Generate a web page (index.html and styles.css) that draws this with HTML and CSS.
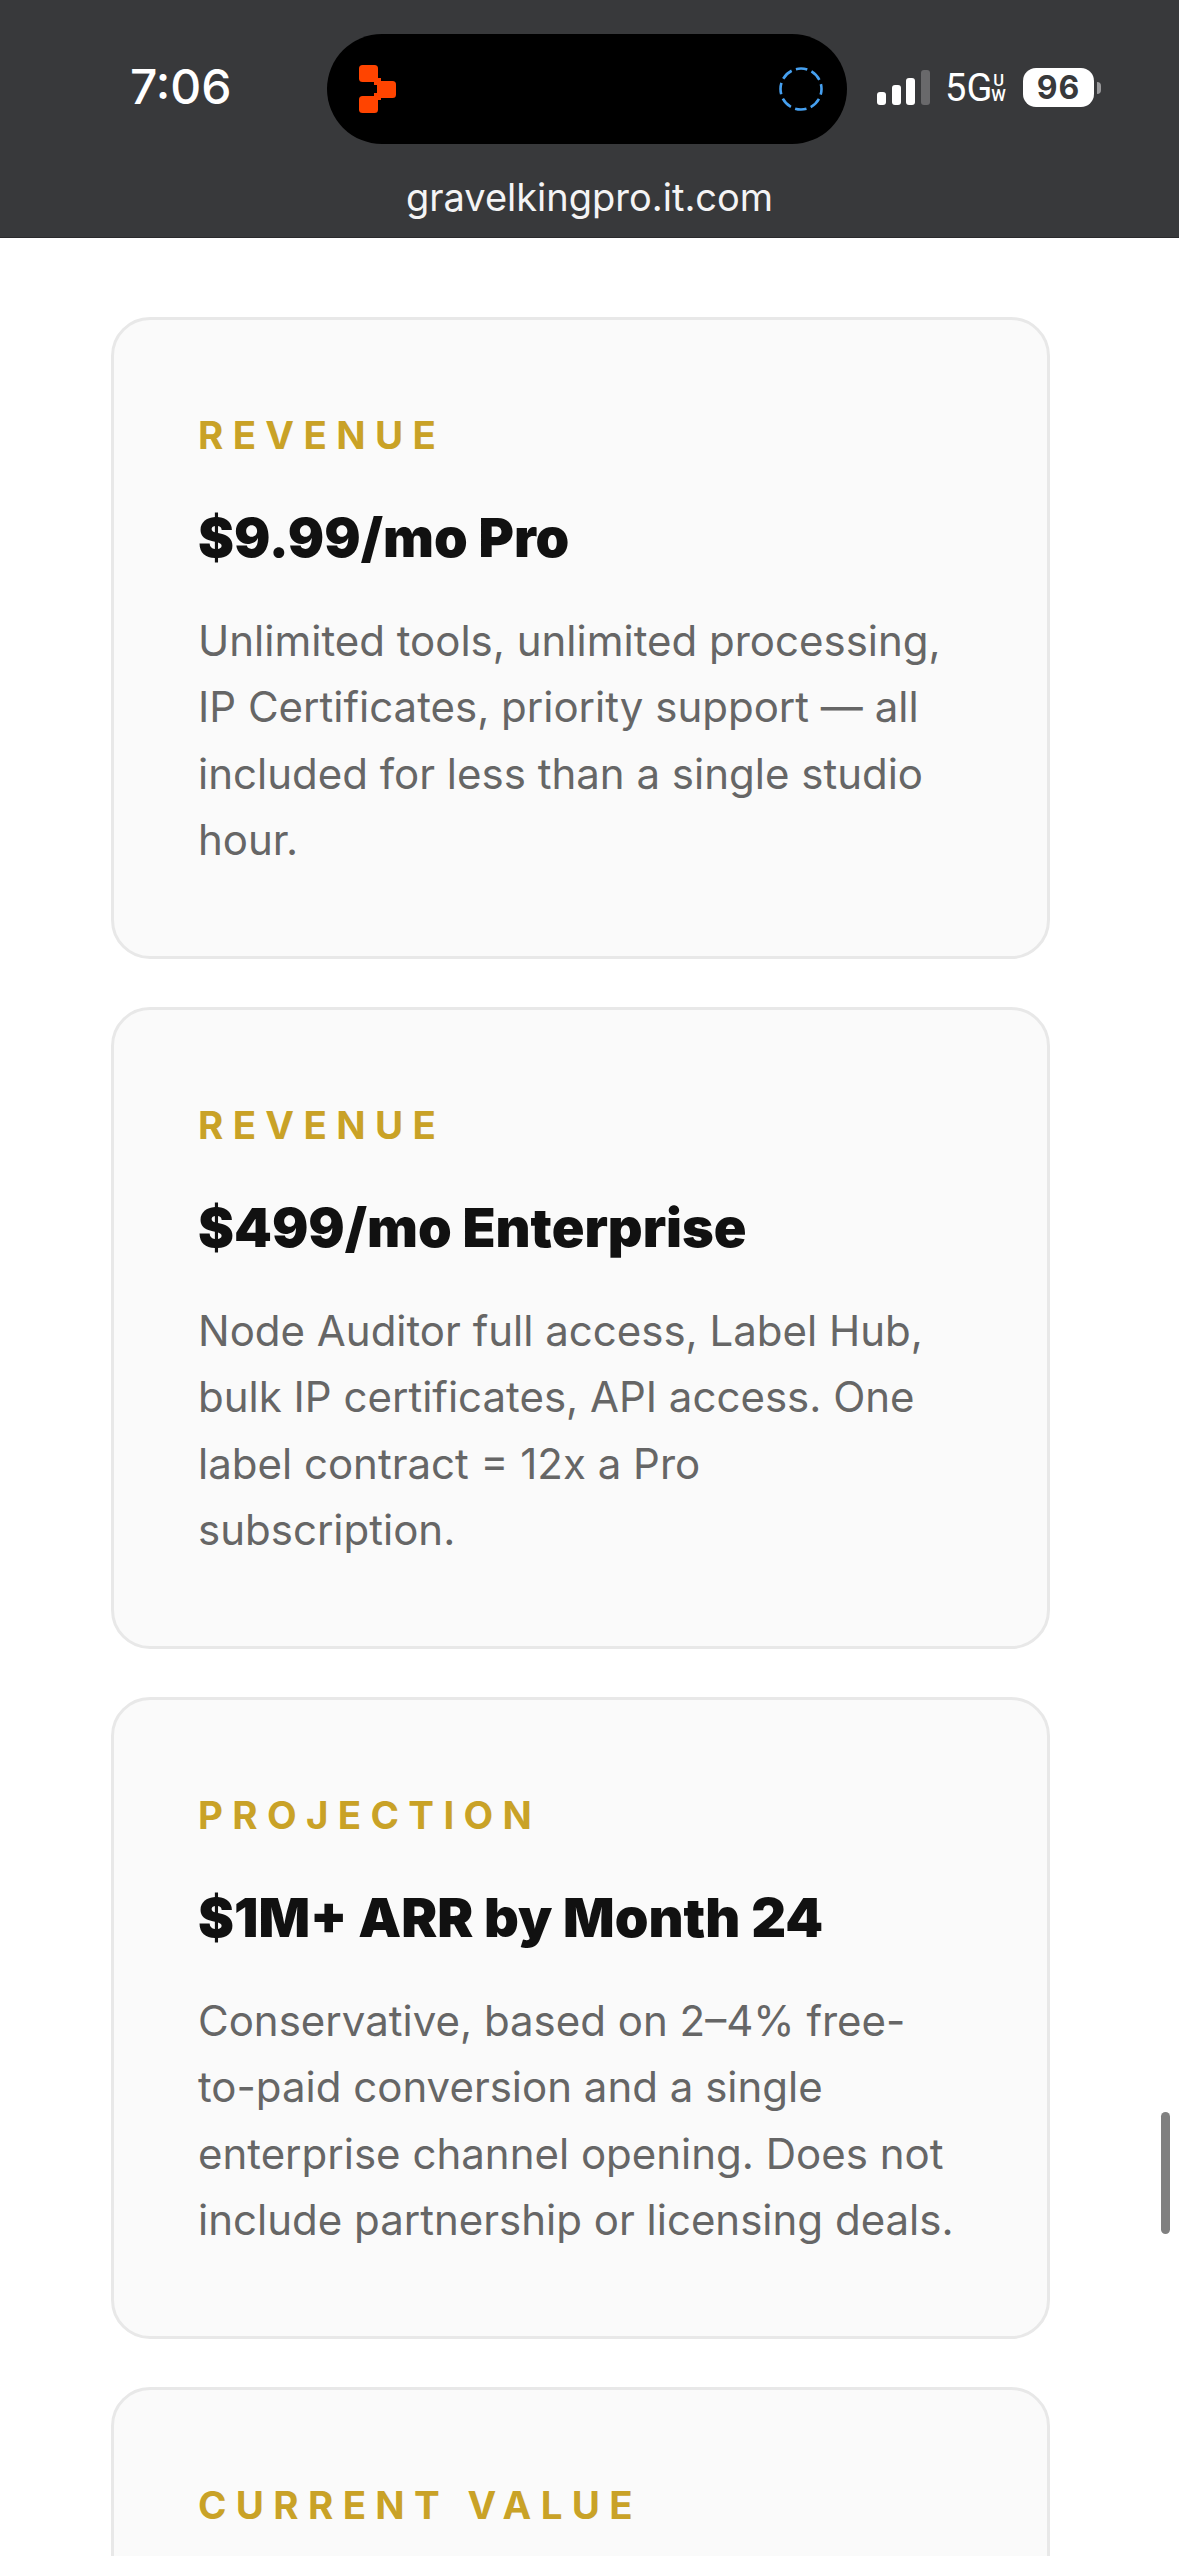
FILE: index.html
```html
<!DOCTYPE html>
<html lang="en">
<head>
<meta charset="utf-8">
<title>gravelkingpro.it.com</title>
<link rel="stylesheet" href="styles.css">
</head>
<body>
<div class="page">
  <header class="top">
    <div class="status">
      <span class="time">7:06</span>
      <div class="island">
        <svg class="logo" width="37" height="48" viewBox="0 0 37 48"><rect x="0" y="0" width="19" height="17" rx="3.5" fill="#ff4400"/><rect x="18" y="16" width="19" height="17" rx="3.5" fill="#ff4400"/><rect x="0" y="31" width="19" height="17" rx="3.5" fill="#ff4400"/><rect x="15" y="13" width="7" height="7" fill="#ff4400"/><rect x="15" y="28" width="7" height="7" fill="#ff4400"/></svg>
        <svg class="ring" width="44" height="44" viewBox="0 0 44 44"><circle cx="22" cy="22" r="20.5" fill="none" stroke="#46a0f0" stroke-width="2.6" stroke-dasharray="11.6 4.5" stroke-dashoffset="5.8"/></svg>
      </div>
      <div class="indicators">
        <div class="signal"><i class="bar b1"></i><i class="bar b2"></i><i class="bar b3"></i><i class="bar b4"></i></div>
        <span class="net">5G</span>
        <span class="uw"><span>U</span><span>W</span></span>
        <div class="battery"><span class="level">96</span></div>
        <i class="nub"></i>
      </div>
    </div>
    <div class="url">gravelkingpro.it.com</div>
  </header>
  <main class="cards">
    <section class="card">
      <div class="label">REVENUE</div>
      <h2 class="title">$9.99/mo Pro</h2>
      <p class="desc">Unlimited tools, unlimited processing, IP Certificates, priority support — all included for less than a single studio hour.</p>
    </section>
    <section class="card">
      <div class="label">REVENUE</div>
      <h2 class="title">$499/mo Enterprise</h2>
      <p class="desc">Node Auditor full access, Label Hub, bulk IP certificates, API access. One label contract = 12x a Pro subscription.</p>
    </section>
    <section class="card">
      <div class="label">PROJECTION</div>
      <h2 class="title">$1M+ ARR by Month 24</h2>
      <p class="desc">Conservative, based on 2–4% free-to-paid conversion and a single enterprise channel opening. Does not include partnership or licensing deals.</p>
    </section>
    <section class="card">
      <div class="label">CURRENT VALUE</div>
    </section>
  </main>
  <div class="scrollbar"></div>
</div>
</body>
</html>
```

FILE: styles.css
```css
* { box-sizing: border-box; }
html, body { margin: 0; padding: 0; background: #fff; }
.page {
  position: relative;
  width: 1179px;
  height: 2556px;
  overflow: hidden;
  font-family: Inter, "Liberation Sans", sans-serif;
}
.top {
  height: 238px;
  background: #38393b;
  border-bottom: 1px solid #2a2a2c;
  color: #fff;
  padding-top: 34px;
}
.status {
  display: flex;
  align-items: center;
  height: 110px;
  padding-left: 130px;
}
.time {
  width: 197px;
  font-size: 48px;
  font-weight: 500;
  line-height: 1;
  margin-top: -4px;
}
.island {
  width: 520px;
  height: 110px;
  background: #000;
  border-radius: 55px;
  display: flex;
  align-items: center;
  justify-content: space-between;
  padding: 0 24px 0 32px;
}
.indicators {
  display: flex;
  align-items: center;
  margin-left: 30px;
  height: 40px;
  margin-top: -3px;
}
.signal {
  display: flex;
  align-items: flex-end;
  gap: 5.7px;
  height: 35px;
}
.bar { display: block; width: 9px; border-radius: 3px; background: #fff; }
.b1 { height: 13px; }
.b2 { height: 20px; }
.b3 { height: 27px; }
.b4 { height: 35px; background: #69696b; }
.net {
  font-family: Roboto, sans-serif;
  font-size: 38px;
  line-height: 1;
  margin-left: 15px;
  width: 44px;
}
.uw {
  display: flex;
  flex-direction: column;
  font-family: Roboto, sans-serif;
  font-size: 16.5px;
  font-weight: 500;
  line-height: 15px;
  margin-left: 2px;
  text-align: center;
  width: 15px;
}
.battery {
  width: 71px;
  height: 39px;
  margin-left: 17px;
  background: #fff;
  border-radius: 13px;
  display: flex;
  align-items: center;
  justify-content: center;
}
.level {
  color: #38393b;
  font-size: 32px;
  font-weight: 700;
  letter-spacing: 1px;
  line-height: 1;
}
.nub {
  display: block;
  width: 4px;
  height: 12px;
  margin-left: 3px;
  background: #9a9a9c;
  border-radius: 0 6px 6px 0;
}
.url {
  text-align: center;
  font-size: 38px;
  font-weight: 400;
  line-height: 44px;
  margin-top: 31px;
  color: #f4f4f5;
}
.cards {
  display: flex;
  flex-direction: column;
  gap: 48px;
  padding: 79px 129px 0 111px;
}
.card {
  height: 642px;
  flex: none;
  background: #fafafa;
  border: 3px solid #e8e8e8;
  border-radius: 39px;
  padding: 93px 84px 0;
}
.label {
  color: #c9a227;
  font-size: 38.5px;
  font-weight: 700;
  letter-spacing: 9.35px;
  line-height: 44px;
}
.title {
  color: #111;
  font-size: 54px;
  font-weight: 900;
  line-height: 64px;
  margin: 49px 0 0;
}
.desc {
  color: #666;
  font-size: 42px;
  font-weight: 400;
  line-height: 66.3px;
  margin: 38px 0 0;
}
.scrollbar {
  position: absolute;
  left: 1161px;
  top: 2112px;
  width: 9px;
  height: 122px;
  border-radius: 5px;
  background: #808080;
}
```
